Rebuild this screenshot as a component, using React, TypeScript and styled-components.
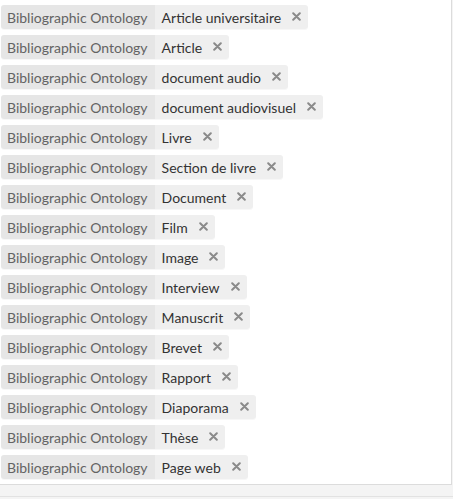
import styled, { createGlobalStyle } from "styled-components";

const types = [
  "Article universitaire",
  "Article",
  "document audio",
  "document audiovisuel",
  "Livre",
  "Section de livre",
  "Document",
  "Film",
  "Image",
  "Interview",
  "Manuscrit",
  "Brevet",
  "Rapport",
  "Diaporama",
  "Thèse",
  "Page web",
];

const GlobalStyle = createGlobalStyle`
  html, body {
    margin: 0;
    padding: 0;
    background: #f4f4f4;
    font-family: Lato, "Open Sans", sans-serif;
  }
`;

const Page = styled.div`
  width: 453px;
  height: 499px;
  display: flex;
  flex-direction: column;
  background: #f4f4f4;
`;

const Box = styled.div`
  width: 452px;
  background: #fff;
  border-right: 1px solid #dcdcdc;
  border-bottom: 1px solid #dcdcdc;
  padding: 5px 0 5px 1px;
  box-sizing: border-box;
  display: flex;
  flex-direction: column;
  align-items: flex-start;
  gap: 6px;
`;

const Footer = styled.div`
  margin-top: auto;
  height: 2px;
  border-top: 1px solid #e2e2e2;
`;

const Tag = styled.div`
  display: flex;
  height: 24px;
  border-radius: 3px;
  overflow: hidden;
  box-shadow: 0 1px 0 rgba(0, 0, 0, 0.03);
  font-size: 14px;
  line-height: 25px;
`;

const Label = styled.span`
  background: #e6e6e6;
  color: #636363;
  padding: 0 7px 0 6px;
`;

const Value = styled.span`
  display: flex;
  align-items: center;
  background: #efefef;
  color: #333;
  padding: 0 7px 0 7px;
`;

const Remove = styled.span`
  display: inline-flex;
  margin-left: 11px;
  margin-top: -1px;
`;

const Cross = () => (
  <svg width="9" height="9" viewBox="0 0 9 9">
    <path d="M1.2 1.2 L7.8 7.8 M7.8 1.2 L1.2 7.8" stroke="#8a8a8a" strokeWidth="2" strokeLinecap="round" />
  </svg>
);

export default function App() {
  return (
    <Page>
      <GlobalStyle />
      <Box>
        {types.map((t) => (
          <Tag key={t}>
            <Label>Bibliographic Ontology</Label>
            <Value>
              {t}
              <Remove>
                <Cross />
              </Remove>
            </Value>
          </Tag>
        ))}
      </Box>
      <Footer />
    </Page>
  );
}
